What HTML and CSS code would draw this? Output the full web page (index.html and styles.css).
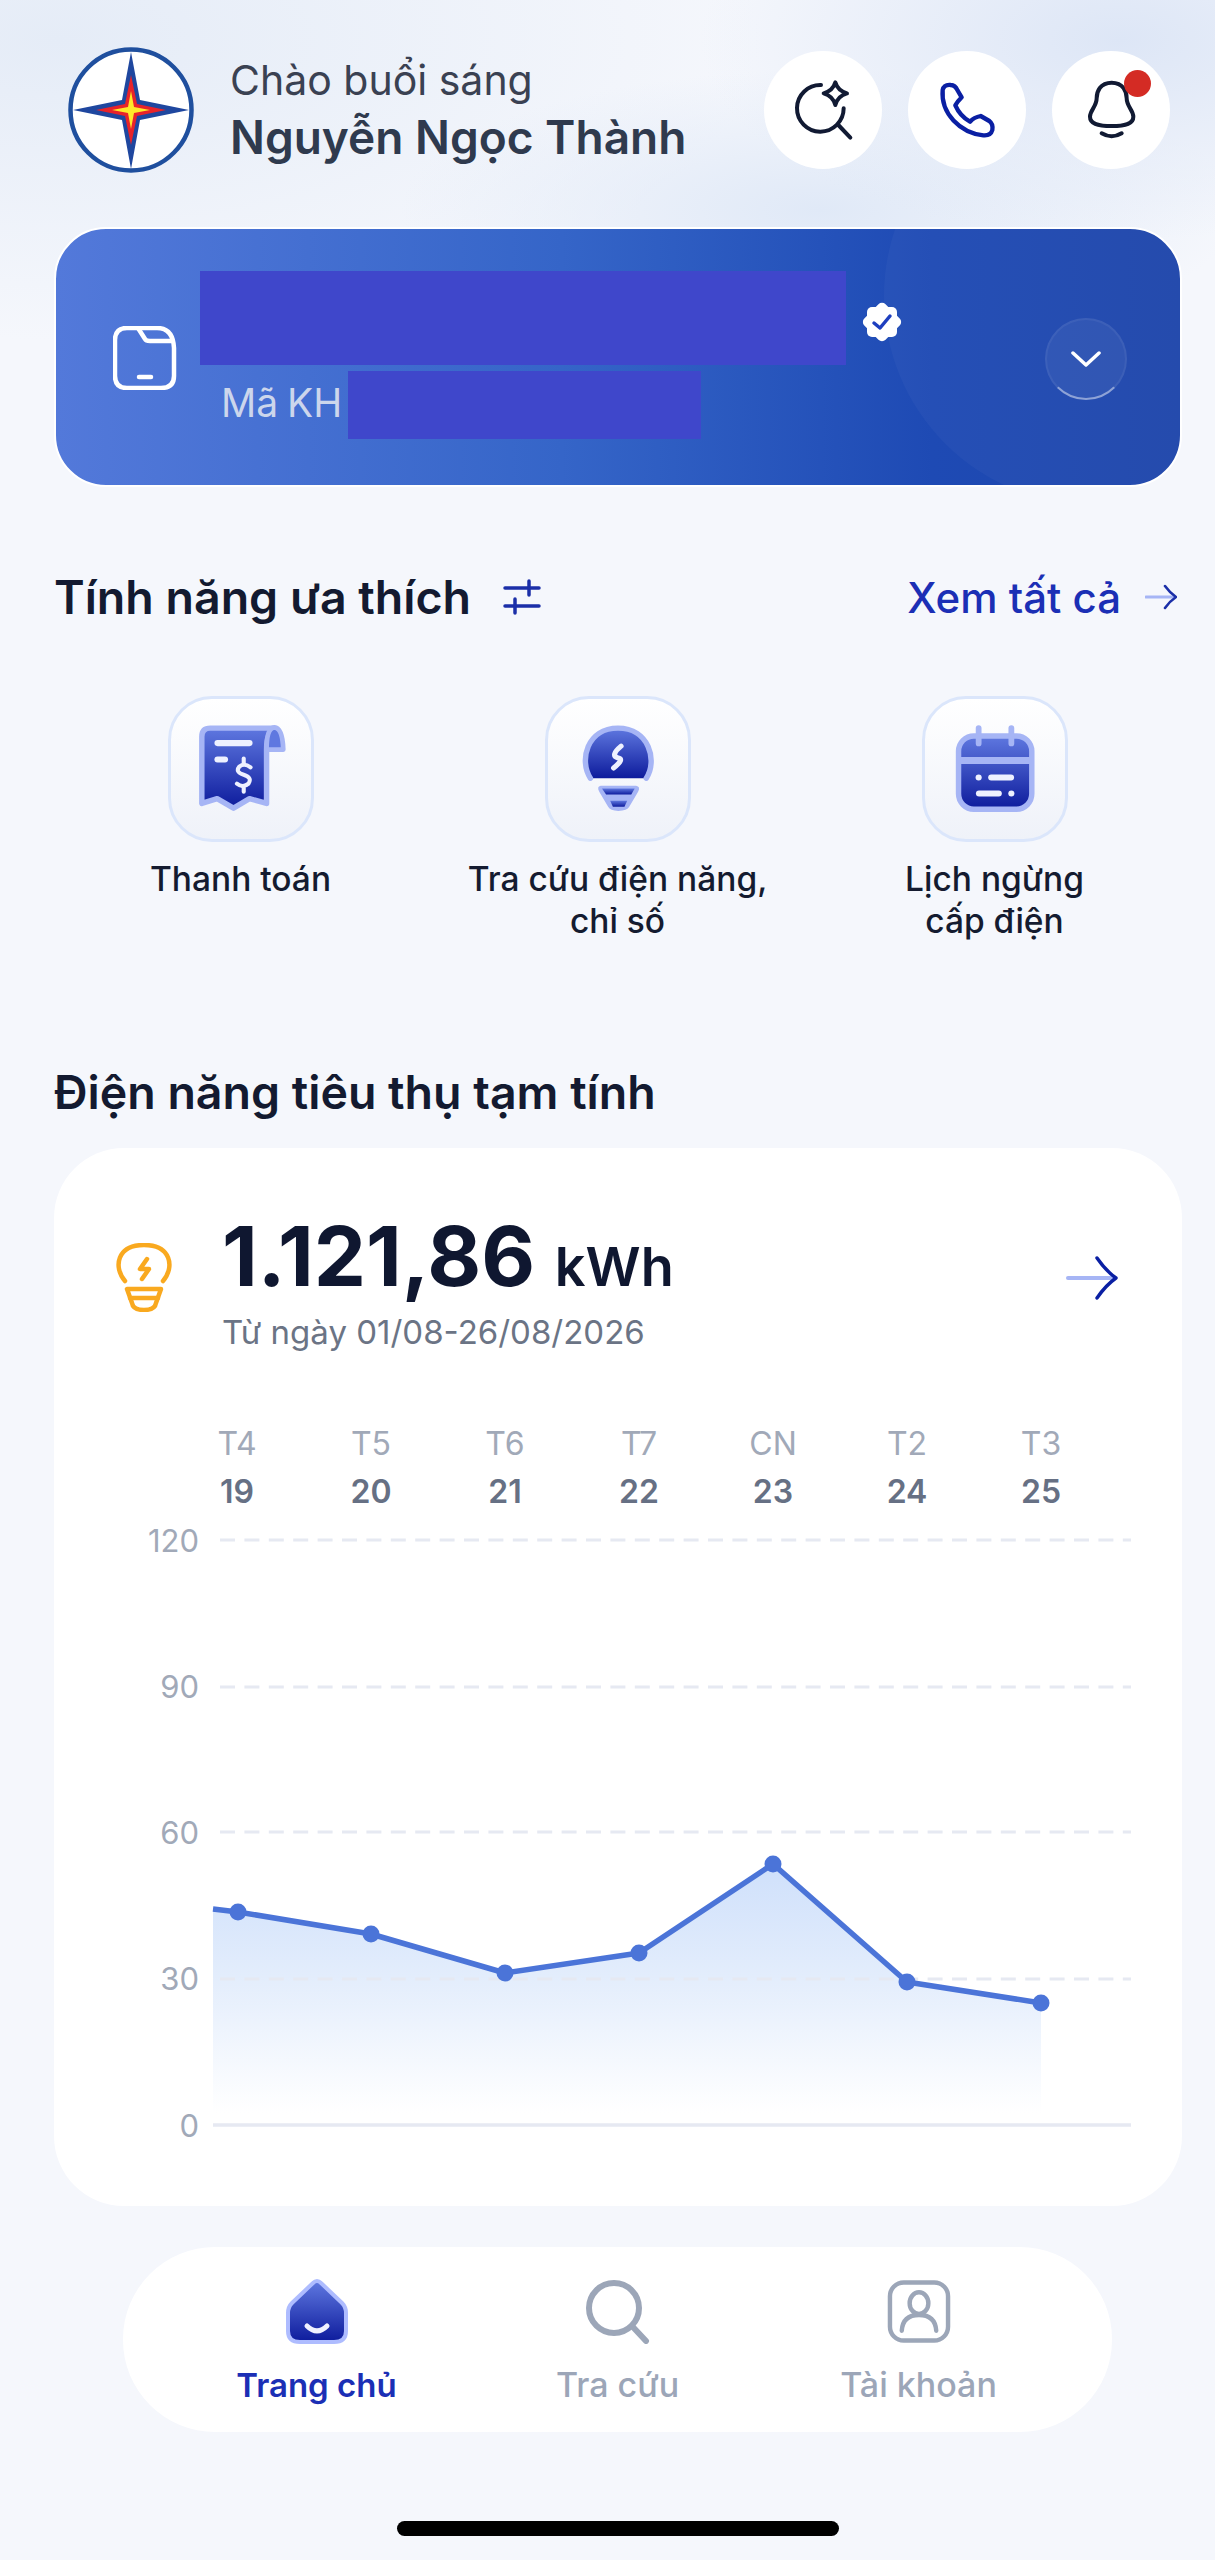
FILE: index.html
```html
<!DOCTYPE html>
<html lang="vi">
<head>
<meta charset="utf-8">
<title>Trang chủ</title>
<link rel="stylesheet" href="styles.css">
</head>
<body>
<svg class="defs" width="0" height="0" aria-hidden="true"><defs>
<linearGradient id="g" x1="0" y1="0" x2="0" y2="1"><stop offset="0" stop-color="#5f78e0"/><stop offset="1" stop-color="#0d1b9c"/></linearGradient>
<linearGradient id="area" x1="0" y1="0" x2="0" y2="1"><stop offset="0" stop-color="#cfe0fb"/><stop offset=".45" stop-color="#e3edfc"/><stop offset="1" stop-color="#ffffff"/></linearGradient>
</defs></svg>
<main class="page">
  <header class="top">
    <svg class="logo" viewBox="0 0 126 126">
      <circle cx="63" cy="63" r="60.5" fill="#fff" stroke="#1f4f9e" stroke-width="4.5"/>
      <path d="M63 5 L72 53 L121 63 L72 73 L63 122 L54 73 L5 63 L54 53Z" fill="#1f479f"/>
      <path d="M63 28 L69 57 L98 63 L69 69 L63 98 L57 69 L28 63 L57 57Z" fill="#e8232a"/>
      <path d="M63 44 L66 60 L82 63 L66 66 L63 82 L60 66 L44 63 L60 60Z" fill="#ffe92a"/>
    </svg>
    <div class="greet">
      <div class="hello">Chào buổi sáng</div>
      <div class="name">Nguyễn Ngọc Thành</div>
    </div>
    <div class="actions">
      <div class="round"><svg viewBox="39 33 354 354"><g fill="none" stroke="#111a33" stroke-width="12" stroke-linecap="round" stroke-linejoin="round"><path d="M210 135 A70 70 0 1 0 278 205"/><path d="M262 255 L298 293"/><path d="M253 127 Q260 152 288 160 Q260 168 253 195 Q246 168 218 160 Q246 152 253 127Z"/></g></svg></div>
      <div class="round"><svg viewBox="474 33 354 354"><path d="M578 150 Q582 133 602 135 Q616 136 622 150 L635 172 Q622 185 616 196 Q630 228 660 245 Q672 232 692 228 L718 243 Q730 252 727 270 Q722 288 700 286 C630 278 572 220 578 150Z" fill="none" stroke="#0a1fa3" stroke-width="13" stroke-linejoin="round"/></svg></div>
      <div class="round"><svg viewBox="906 33 354 354"><g fill="none" stroke="#111a33" stroke-width="12" stroke-linecap="round"><path d="M1085 128 C1050 128 1040 155 1040 175 C1040 200 1020 210 1020 230 C1020 250 1040 258 1085 258 C1130 258 1150 250 1150 230 C1150 210 1130 200 1130 175 C1130 155 1120 128 1085 128Z"/><path d="M1055 280 Q1085 298 1115 280"/></g></svg><span class="dot"></span></div>
    </div>
  </header>

  <section class="account">
    <span class="arc"></span>
    <svg class="file" viewBox="0 0 64 64"><g fill="none" stroke="#fff" stroke-width="4.5" stroke-linecap="round" stroke-linejoin="round"><path d="M14 2 H44 Q60 2 61 22 V50 Q61 62 48 62 H14 Q2 62 2 50 V14 Q2 2 14 2Z"/><path d="M25 2 L32 13 Q33 15 37 15 H58"/><path d="M26 51 H38"/></g></svg>
    <div class="acc-text">
      <div class="acc-row"><span class="mask mask-name"></span>
        <svg class="badge" viewBox="0 0 44 44"><g fill="#fff"><rect x="7" y="7" width="30" height="30" rx="5"/><rect x="7" y="7" width="30" height="30" rx="5" transform="rotate(45 22 22)"/></g><path d="M14 23 L20 28 L30 16" fill="none" stroke="#1e3fbf" stroke-width="3.5" stroke-linecap="round" stroke-linejoin="round"/></svg>
      </div>
      <div class="acc-row meta"><span class="code">Mã KH</span><span class="mask mask-code"></span></div>
    </div>
    <div class="chev"><svg viewBox="0 0 30 16"><path d="M2 2 L15 14 L28 2" fill="none" stroke="#fff" stroke-width="3.5" stroke-linecap="round" stroke-linejoin="round"/></svg></div>
  </section>

  <div class="head first">
    <h2>Tính năng ưa thích</h2>
    <svg class="sliders" viewBox="0 0 38 36"><g fill="none" stroke="#1b2fa8" stroke-width="3.5" stroke-linecap="round"><path d="M2 9 H36"/><path d="M26 2 V16"/><path d="M2 27 H36"/><path d="M12 20 V34"/></g></svg>
    <a class="all">Xem tất cả</a>
    <svg class="arrow-s" viewBox="0 0 32 26"><path d="M1 13 H29" stroke="#a6b5f5" stroke-width="3" stroke-linecap="round"/><path d="M20 2 Q25 9 31 13 Q25 17 20 24" fill="none" stroke="#1b2fa8" stroke-width="2.6" stroke-linecap="round" stroke-linejoin="round"/></svg>
  </div>

  <div class="features">
    <div class="feature">
      <div class="tile"><svg viewBox="135 132 270 270"><path d="M180 147 H368 Q345 160 345 210 V368 L295 354 L248 382 L200 354 L155 368 V172 Q155 147 180 147Z" fill="url(#g)" stroke="#a6b5f5" stroke-width="16" stroke-linejoin="round"/><path d="M345 210 Q345 147 368 145 Q392 147 394 210Z" fill="#5f78e0" stroke="#a6b5f5" stroke-width="14" stroke-linejoin="round"/><g fill="#eef1ff"><rect x="192" y="182" width="112" height="18" rx="9"/><rect x="192" y="230" width="40" height="18" rx="9"/></g><g fill="none" stroke="#eef1ff" stroke-width="12" stroke-linecap="round"><path d="M298 262 Q280 248 265 260 Q252 276 278 284 Q304 292 292 310 Q276 324 258 310"/><path d="M278 236 V250"/><path d="M278 322 V334"/></g></svg></div>
      <p>Thanh toán</p>
    </div>
    <div class="feature">
      <div class="tile"><svg viewBox="128 130 270 270"><path d="M188 292 C150 240 175 145 263 145 C350 145 378 240 342 292Z" fill="url(#g)"/><path d="M182 292 C148 240 172 145 263 145 C354 145 380 240 346 292" fill="none" stroke="#a6b5f5" stroke-width="16" stroke-linecap="round"/><path d="M272 198 Q240 225 262 232 Q284 235 250 262" fill="none" stroke="#eef1ff" stroke-width="15" stroke-linecap="round"/><path d="M212 314 H316 Q330 316 322 332 L296 376 Q290 388 264 388 Q240 388 234 376 L208 332 Q200 316 212 314Z" fill="#a6b5f5"/><path d="M216 322 H312 L302 340 H228Z" fill="url(#g)"/><path d="M240 358 H290 L282 376 H248Z" fill="url(#g)"/></svg></div>
      <p>Tra cứu điện năng,<br>chỉ số</p>
    </div>
    <div class="feature">
      <div class="tile"><svg viewBox="117 130 270 270"><rect x="145" y="168" width="215" height="215" rx="45" fill="url(#g)" stroke="#a6b5f5" stroke-width="16"/><path d="M145 240 H360" stroke="#a6b5f5" stroke-width="20"/><path d="M204 145 V190 M300 145 V190" stroke="#a6b5f5" stroke-width="17" stroke-linecap="round"/><g fill="#eef1ff"><circle cx="204" cy="290" r="9"/><rect x="232" y="281" width="76" height="18" rx="9"/><rect x="196" y="328" width="76" height="18" rx="9"/><circle cx="300" cy="337" r="9"/></g></svg></div>
      <p>Lịch ngừng<br>cấp điện</p>
    </div>
  </div>

  <div class="head second"><h2>Điện năng tiêu thụ tạm tính</h2></div>

  <section class="usage">
    <div class="summary">
      <svg class="bulb" viewBox="0 0 58 69"><g fill="none" stroke="#f9a91f" stroke-width="4.5" stroke-linecap="round" stroke-linejoin="round"><path d="M10 38 C-2 24 2 2 29 2 C56 2 60 24 48 38"/><path d="M32 16 L25 26 H34 L27 36"/><path d="M12 46 H46 L41 60 Q40 67 29 67 Q18 67 17 60Z"/><path d="M15 55 H43"/></g></svg>
      <div class="figures">
        <div class="value">1.121,86 <span class="unit">kWh</span></div>
        <div class="range">Từ ngày 01/08-26/08/2026</div>
      </div>
      <svg class="arrow-l" viewBox="0 0 52 44"><path d="M2 22 H46" stroke="#a6b5f5" stroke-width="4" stroke-linecap="round"/><path d="M31 2 Q40 15 50 22 Q40 29 31 42" fill="none" stroke="#0a1fa3" stroke-width="3.4" stroke-linecap="round" stroke-linejoin="round"/></svg>
    </div>
    <div class="days">
      <div class="day"><span>T4</span><b>19</b></div>
      <div class="day"><span>T5</span><b>20</b></div>
      <div class="day"><span>T6</span><b>21</b></div>
      <div class="day"><span>T7</span><b>22</b></div>
      <div class="day"><span>CN</span><b>23</b></div>
      <div class="day"><span>T2</span><b>24</b></div>
      <div class="day"><span>T3</span><b>25</b></div>
    </div>
    <svg class="chart" viewBox="54 1520 1128 640">
      <g class="ticks">
        <text x="199" y="1551">120</text><text x="199" y="1697">90</text><text x="199" y="1843">60</text><text x="199" y="1989">30</text><text x="199" y="2136">0</text>
      </g>
      <path d="M213 1908 L238 1911 L371 1933 L505 1972 L639 1952 L773 1863 L907 1981 L1041 2002 V2112 H213Z" fill="url(#area)"/>
      <g stroke="#e6e9f2" stroke-width="3" stroke-dasharray="15 9.4">
        <path d="M220 1539 H1131"/><path d="M220 1686 H1131"/><path d="M220 1831 H1131"/><path d="M220 1978 H1131"/>
      </g>
      <path d="M213 2124 H1131" stroke="#e6e9f2" stroke-width="3.5"/>
      <path d="M213 1908 L238 1911 L371 1933 L505 1972 L639 1952 L773 1863 L907 1981 L1041 2002" fill="none" stroke="#4b74d8" stroke-width="5.5" stroke-linejoin="round"/>
      <g fill="#4b74d8"><circle cx="238" cy="1911" r="8.5"/><circle cx="371" cy="1933" r="8.5"/><circle cx="505" cy="1972" r="8.5"/><circle cx="639" cy="1952" r="8.5"/><circle cx="773" cy="1863" r="8.5"/><circle cx="907" cy="1981" r="8.5"/><circle cx="1041" cy="2002" r="8.5"/></g>
    </svg>
  </section>

  <nav class="tabs">
    <div class="tab on"><svg viewBox="0 0 62 65"><path d="M27 4 Q31 0 35 4 L56 24 Q60 28 60 34 V52 Q60 63 48 63 H14 Q2 63 2 52 V34 Q2 28 6 24Z" fill="url(#g)" stroke="#aebcff" stroke-width="4"/><path d="M21 47 Q31 57 41 47" fill="none" stroke="#f0f2ff" stroke-width="5" stroke-linecap="round"/></svg><span>Trang chủ</span></div>
    <div class="tab"><svg viewBox="0 0 64 65"><g fill="none" stroke="#9ca6b8" stroke-width="6" stroke-linecap="round"><circle cx="28" cy="29" r="25"/><path d="M46 47 L60 62"/></g></svg><span>Tra cứu</span></div>
    <div class="tab"><svg viewBox="0 0 65 65"><g fill="none" stroke="#9ca6b8" stroke-width="4.5" stroke-linecap="round"><rect x="3" y="3" width="59" height="59" rx="14"/><ellipse cx="32.500" cy="24" rx="9.500" ry="11"/><path d="M15 52 Q16 36 32.500 36 Q49 36 50 52"/></g></svg><span>Tài khoản</span></div>
  </nav>
  <div class="homebar"></div>
</main>
</body>
</html>
```
FILE: styles.css
```css
* { box-sizing: border-box; }
html, body { margin: 0; padding: 0; }
body { font-family: Inter, "Noto Sans", sans-serif; color: #111a33; }
.defs { position: absolute; }
.page {
  width: 1215px;
  height: 2560px;
  overflow: hidden;
  display: flex;
  flex-direction: column;
  background:
    radial-gradient(420px 200px at 1120px 40px, #dde6f6 0%, rgba(221,230,246,0) 100%),
    radial-gradient(420px 140px at 820px 210px, #e0e9f7 0%, rgba(224,233,247,0) 100%),
    radial-gradient(700px 300px at 60px 40px, #e5ecf7 0%, rgba(229,236,247,0) 100%),
    #f5f7fc;
}

.top { display: flex; align-items: center; height: 126px; margin-top: 47px; padding: 0 45px 0 68px; }
.logo { width: 126px; height: 126px; flex: none; }
.greet { margin-left: 36px; }
.hello { font-size: 41px; line-height: 48px; color: #3a4152; }
.name { font-size: 46px; line-height: 54px; font-weight: 600; color: #2f3a4e; margin-top: 6px; }
.actions { margin-left: auto; display: flex; gap: 26px; }
.round { position: relative; width: 118px; height: 118px; border-radius: 50%; background: #fff; }
.round svg { display: block; width: 118px; height: 118px; }
.dot { position: absolute; right: 19.5px; top: 18.5px; width: 27px; height: 27px; border-radius: 50%; background: #d42b24; }

.account {
  position: relative;
  overflow: hidden;
  flex: none;
  display: flex;
  width: 1128px;
  height: 260px;
  margin: 54px 0 0 54px;
  padding: 42px 53px 0 57px;
  border: 2px solid #fff;
  border-radius: 52px;
  background: linear-gradient(90deg, #5379da 0%, #3565c8 45%, #1e4ab4 78%, #1e46ab 100%);
}
.arc { position: absolute; left: 828px; top: -142px; width: 418px; height: 418px; border-radius: 50%; background: rgba(255,255,255,.03); }
.file { position: relative; width: 64px; height: 64px; flex: none; margin-top: 55px; }
.acc-text { position: relative; margin-left: 23px; }
.acc-row { display: flex; align-items: flex-start; }
.mask { display: block; background: #3f47cb; }
.mask-name { width: 646px; height: 94px; }
.mask-code { width: 353px; height: 68px; }
.badge { width: 44px; height: 44px; margin: 29px 0 0 14px; }
.meta { margin-top: 6px; padding-left: 21px; }
.code { font-size: 39px; line-height: 64px; word-spacing: -2px; color: #ccd6ec; width: 127px; white-space: nowrap; }
.chev { position: relative; margin: 47px 0 0 auto; width: 82px; height: 82px; border-radius: 50%; display: flex; align-items: center; justify-content: center; background: rgba(255,255,255,.06); border: 2px solid rgba(255,255,255,.06); border-bottom-color: rgba(255,255,255,.45); }
.chev svg { width: 30px; height: 16px; }

.head { display: flex; align-items: center; height: 50px; padding: 0 38px 0 54px; flex: none; }
.head.first { margin-top: 85px; }
.head.second { margin-top: 125px; }
.head h2 { margin: 0; font-size: 46.500px; line-height: 50px; font-weight: 600; color: #131a30; }
.sliders { width: 38px; height: 36px; margin-left: 32px; }
.all { margin-left: auto; font-size: 42px; font-weight: 500; color: #1b2fb5; }
.arrow-s { width: 32px; height: 26px; margin-left: 24px; }

.features { display: grid; grid-template-columns: repeat(3, 377px); margin-top: 74px; padding-left: 52px; height: 246px; flex: none; }
.feature { display: flex; flex-direction: column; align-items: center; }
.tile { width: 146px; height: 146px; border: 3px solid #dbe6fb; border-radius: 44px; background: linear-gradient(180deg, #fff 0%, #eff2f9 100%); display: flex; align-items: center; justify-content: center; }
.tile svg { width: 92px; height: 92px; }
.feature p { margin: 16px 0 0; font-size: 33.500px; line-height: 42px; text-align: center; font-weight: 500; color: #141b30; }

.usage { flex: none; width: 1128px; height: 1058px; margin: 31px 0 0 54px; background: #fff; border-radius: 70px; }
.summary { display: flex; height: 210px; padding: 62px 64px 0 61px; }
.bulb { width: 58px; height: 69px; margin-top: 33px; flex: none; }
.figures { margin-left: 49px; }
.value { font-size: 83px; line-height: 92px; font-weight: 700; color: #0f1730; white-space: nowrap; }
.unit { font-size: 54px; font-weight: 600; }
.range { font-size: 33px; line-height: 42px; color: #6b7485; margin-top: -2px; }
.arrow-l { width: 52px; height: 44px; margin: 46px 0 0 auto; }
.days { display: grid; grid-template-columns: repeat(7, 134px); padding-left: 116px; margin-top: 62px; }
.day { display: flex; flex-direction: column; align-items: center; font-size: 32px; line-height: 48px; }
.day span { color: #a1a9b8; }
.day b { font-weight: 600; color: #667084; }
.chart { display: block; width: 1128px; height: 640px; margin-top: 5px; }
.ticks text { font-family: Inter, sans-serif; font-size: 31px; fill: #a1a9b8; text-anchor: end; }

.tabs { flex: none; display: grid; grid-template-columns: repeat(3, 301px); width: 989px; height: 185px; margin: 41px 0 0 123px; padding: 32px 0 0 43px; background: #fff; border-radius: 92px; }
.tab { display: flex; flex-direction: column; align-items: center; gap: 21px; }
.tab svg { width: 64px; height: 65px; }
.tab span { font-size: 34px; line-height: 40px; font-weight: 500; color: #9ca6b8; }
.tab.on span { font-size: 33px; font-weight: 600; color: #1b2fb5; }
.homebar { flex: none; width: 442px; height: 15px; margin: 89px 0 0 397px; background: #000; border-radius: 8px; }
```
